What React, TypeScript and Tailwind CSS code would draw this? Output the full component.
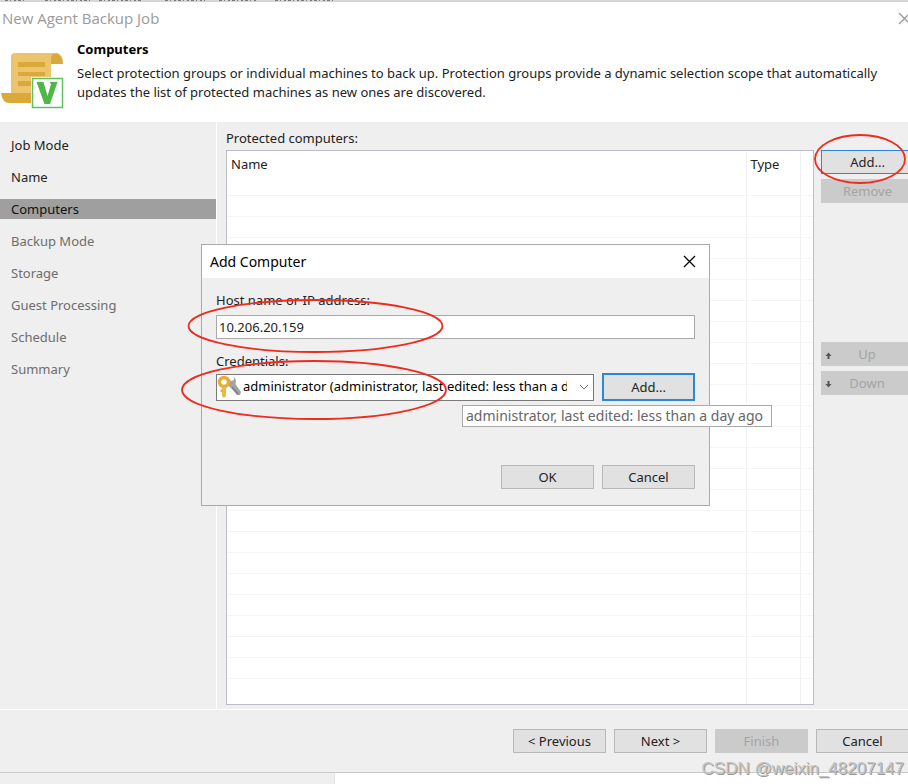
import React from 'react';

const steps = [
  { label: 'Job Mode', state: 'done' },
  { label: 'Name', state: 'done' },
  { label: 'Computers', state: 'current' },
  { label: 'Backup Mode', state: 'todo' },
  { label: 'Storage', state: 'todo' },
  { label: 'Guest Processing', state: 'todo' },
  { label: 'Schedule', state: 'todo' },
  { label: 'Summary', state: 'todo' },
];

const stepClass: Record<string, string> = {
  done: 'text-[#222222]',
  current: 'bg-[#9f9f9f] text-[#111111]',
  todo: 'text-[#6d6d6d]',
};

const emptyRows = Array.from({ length: 24 }, (_, i) => i);

function JobIcon() {
  return (
    <svg className="h-[60px] w-[64px] shrink-0" viewBox="0 0 64 60" aria-hidden="true">
      <path d="M11 7 Q11 3 15 3 H56 Q51 5 51 12 V53 H11 Z" fill="#edc36e" />
      <path d="M51 14 V9 Q51 3 57 3 Q63 5 63 14 Z" fill="#d9aa3a" />
      <path d="M1 43 H31 V53 H10 Q2 53 1 43 Z" fill="#d9aa3a" />
      <path d="M18 12 H45 V17 H18 Z M18 22 H45 V26 H18 Z M18 31 H45 V36 H18 Z" fill="#d9aa3a" />
      <rect x="31" y="27" width="33" height="32" fill="#ffffff" />
      <rect x="32.5" y="28.5" width="30" height="29" fill="#ffffff" stroke="#62c05c" strokeWidth="1.5" />
      <path d="M36.5 32 H43.5 L47.5 46 L51 34 L49.5 32 H57.5 L50 54 H44.5 Z" fill="#4db848" />
    </svg>
  );
}

function KeyIcon() {
  return (
    <svg className="h-[24px] w-[24px] shrink-0" viewBox="0 0 24 24" aria-hidden="true">
      <path d="M11 2 L14 6 L17 5 L16.5 2 Q20 4 18.5 9 L24 17 L23 20 L20 20 L14 13 Q10 11 11 2 Z" fill="#a3a3a3" />
      <path d="M15 12 L21 19" stroke="#808080" strokeWidth="1.5" />
      <circle cx="7" cy="7" r="4.5" fill="#ffffff" stroke="#e8ad35" strokeWidth="3.5" />
      <path d="M5 12 H9 V21 L7 23 L5 21 Z" fill="#efb843" />
      <path d="M3.5 14.5 H6 V17 H3.5 Z" fill="#e8ad35" />
    </svg>
  );
}

function CloseIcon() {
  return (
    <svg className="h-[13px] w-[13px]" viewBox="0 0 13 13" aria-hidden="true">
      <path d="M1 1 L12 12 M12 1 L1 12" stroke="currentColor" strokeWidth="1.3" fill="none" />
    </svg>
  );
}

function ArrowIcon({ down = false }: { down?: boolean }) {
  return (
    <svg className="h-[7px] w-[7px] shrink-0" viewBox="0 0 7 7" aria-hidden="true">
      {down ? (
        <path d="M2.5 0 H4.5 V3 H6.5 L3.5 6.5 L0.5 3 H2.5 Z" fill="#555555" />
      ) : (
        <path d="M2.5 7 H4.5 V4 H6.5 L3.5 0.5 L0.5 4 H2.5 Z" fill="#555555" />
      )}
    </svg>
  );
}

const button = 'h-[24px] w-[93px] shrink-0 border border-[#b8b8b8] bg-[#e1e1e1] pt-px text-[#222222]';
const disabled = 'h-[24px] w-[93px] shrink-0 bg-[#cbcbcb] pt-[2px] text-[#a4a4a4]';

function AddComputerDialog() {
  return (
    <div
      role="dialog"
      aria-label="Add Computer"
      className="absolute left-[201px] top-[244px] w-[509px] border border-[#a9a9a9] bg-[#efefef] text-[#222222]"
    >
      <div className="flex h-[33px] items-center justify-between bg-white pl-2 pr-[13px]">
        <h2 className="text-sm text-black">Add Computer</h2>
        <button aria-label="Close dialog" className="text-black">
          <CloseIcon />
        </button>
      </div>
      <div className="flex flex-col pb-4 pl-[14px] pr-[14px] pt-3">
        <label htmlFor="host" className="h-[20px] leading-[20px]">
          Host name or IP address:
        </label>
        <input
          id="host"
          defaultValue="10.206.20.159"
          className="mt-[5px] h-[24px] w-full border border-[#a9a9a9] bg-white px-[2px] outline-none"
        />
        <label htmlFor="credentials" className="mt-3 h-[20px] leading-[20px]">
          Credentials:
        </label>
        <div className="mt-[2px] flex items-center gap-2">
          <div className="flex h-[27px] min-w-0 flex-1 items-center border border-[#7a7a7a] bg-white">
            <KeyIcon />
            <select id="credentials" className="mr-2 min-w-0 flex-1 appearance-none pl-[2px] text-black outline-none">
              <option>administrator (administrator, last edited: less than a day ago)</option>
            </select>
            <svg className="mx-1 h-[10px] w-[10px] shrink-0" viewBox="0 0 10 10" aria-hidden="true">
              <path d="M1 3 L5 7 L9 3" fill="none" stroke="#777777" />
            </svg>
          </div>
          <button className="h-[28px] w-[93px] shrink-0 border-2 border-[#2c87d6] bg-[#e1e1e1] pt-px">Add...</button>
        </div>
        <div className="mt-16 flex justify-end gap-2">
          <button className={button}>OK</button>
          <button className={button}>Cancel</button>
        </div>
      </div>
    </div>
  );
}

export default function App() {
  return (
    <div className="relative flex min-h-screen flex-col overflow-hidden bg-white font-['Noto_Sans','Open_Sans',sans-serif] text-[13px]">
      <div className="h-[2px] w-full shrink-0 bg-[#d6d6d6]">
        <svg className="block h-px w-[340px]" viewBox="0 0 340 1" aria-hidden="true">
          <path
            d="M5 0.5 H27 M45 0.5 H90 M99 0.5 H143 M165 0.5 H205 M219 0.5 H256 M275 0.5 H336"
            stroke="#777777"
            strokeDasharray="3 2 1 3 2 2"
          />
        </svg>
      </div>
      <div className="flex h-8 shrink-0 items-center justify-between pl-[2px] text-[#9a9a9a]">
        <h1 className="font-['Open_Sans','Noto_Sans',sans-serif] text-[15px]">New Agent Backup Job</h1>
        <button aria-label="Close" className="-mr-[3px]">
          <CloseIcon />
        </button>
      </div>
      <header className="flex h-[88px] shrink-0">
        <div className="pt-4">
          <JobIcon />
        </div>
        <div className="pl-[13px] pt-[6px] leading-[19px] text-[#222222]">
          <h2 className="font-bold text-black">Computers</h2>
          <p className="mt-[5px]">
            Select protection groups or individual machines to back up. Protection groups provide a dynamic selection scope that automatically
            updates the list of protected machines as new ones are discovered.
          </p>
        </div>
      </header>
      <main className="flex flex-1 border-b border-white bg-[#efefef]">
        <nav className="w-[217px] shrink-0 border-r border-white pt-[13px]">
          <ul className="flex flex-col gap-3">
            {steps.map((s) => (
              <li key={s.label} className={`h-[20px] pl-[11px] leading-[21px] ${stepClass[s.state]}`}>
                {s.label}
              </li>
            ))}
          </ul>
        </nav>
        <section className="flex min-w-0 flex-1 flex-col pb-1 pl-[9px] text-[#222222]">
          <p className="h-[28px] leading-[32px]">Protected computers:</p>
          <div className="flex flex-1 gap-[7px]">
            <div className="min-w-0 flex-1 border border-[#bcbcc4] bg-white">
              <table className="w-full table-fixed border-collapse">
                <colgroup>
                  <col />
                  <col className="w-[54px]" />
                  <col className="w-[13px]" />
                </colgroup>
                <thead>
                  <tr className="h-[23px] text-left">
                    <th className="border-r border-[#f0f1f5] px-1 pt-1 font-normal">Name</th>
                    <th className="border-r border-[#f0f1f5] px-1 pt-1 font-normal">Type</th>
                    <th />
                  </tr>
                </thead>
                <tbody>
                  {emptyRows.map((r) => (
                    <tr key={r} className="h-[21px] border-b border-[#f5f5f7]">
                      <td className="border-r border-[#f0f1f5]" />
                      <td className="border-r border-[#f0f1f5]" />
                      <td />
                    </tr>
                  ))}
                  <tr className="h-[25px]">
                    <td className="border-r border-[#f0f1f5]" />
                    <td className="border-r border-[#f0f1f5]" />
                    <td />
                  </tr>
                </tbody>
              </table>
            </div>
            <div className="flex w-[87px] shrink-0 flex-col gap-[5px]">
              <button className="h-[24px] w-[93px] shrink-0 border border-[#2c87d6] bg-[#e1e1e1] pt-px">Add...</button>
              <button disabled className={disabled}>Remove</button>
              <button disabled className={`${disabled} mt-[134px] flex items-center pl-1`}>
                <ArrowIcon />
                <span className="flex-1 pr-3">Up</span>
              </button>
              <button disabled className={`${disabled} flex items-center pl-1`}>
                <ArrowIcon down />
                <span className="flex-1 pr-3">Down</span>
              </button>
            </div>
          </div>
        </section>
      </main>
      <footer className="flex h-[63px] shrink-0 items-center justify-end gap-2 border-b border-[#c8c8c8] bg-[#efefef]">
        <button className={button}>&lt; Previous</button>
        <button className={button}>Next &gt;</button>
        <button disabled className={disabled}>Finish</button>
        <button className={`${button} -mr-px`}>Cancel</button>
      </footer>
      <div className="h-[11px] w-[335px] shrink-0 border-r border-[#e4e4e4] bg-[#efefef]" />

      <AddComputerDialog />
      <div
        role="tooltip"
        className="absolute left-[462px] top-[405px] h-[22px] whitespace-nowrap border border-[#a9a9a9] bg-white pl-[3px] pr-2 text-sm leading-[20px] text-[#666666]"
      >
        administrator, last edited: less than a day ago
      </div>
      <svg className="pointer-events-none absolute left-0 top-0 h-[784px] w-[908px]" viewBox="0 0 908 784" aria-hidden="true">
        <g fill="none" stroke="#f02a1d" strokeWidth="1.8">
          <ellipse cx="315.5" cy="326" rx="127" ry="26" />
          <ellipse cx="314" cy="390" rx="132" ry="29" />
          <ellipse cx="860" cy="159" rx="45" ry="24" />
        </g>
      </svg>
      <p className="absolute bottom-1 right-1 font-['Liberation_Sans',Arial,sans-serif] text-[17px] leading-[22px] text-[#c4c4c4] [text-shadow:1px_1px_0_#9a9a9a]">
        CSDN @weixin_48207147
      </p>
    </div>
  );
}
